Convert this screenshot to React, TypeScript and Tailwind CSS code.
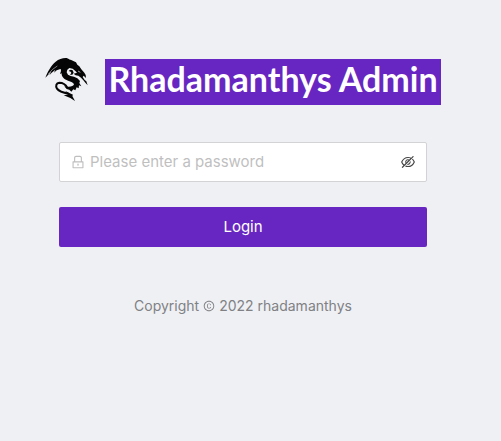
import { useState } from "react";
import { AiOutlineCopyright, AiOutlineEyeInvisible, AiOutlineLock } from "react-icons/ai";

function DragonLogo() {
  return (
    <svg viewBox="15 15 132 132" className="size-11 shrink-0" role="img" aria-label="Dragon">
      <path
        d="M16 77C22 61 33 40 47 29C57 21 69 17 80 18L88 22L94 30L84 46L70 50L61 51L50 55L42 62L46 53L35 62L28 70L34 58L24 69Z"
        fill="#050505"
      />
      <path d="M52 42Q36 51 25 66" fill="none" stroke="#eff0f4" strokeWidth="1.5" />
      <path
        d="M80 25L92 23L100 27L108 31L112 38L118 43L124 52L133 62L137 69L138 78L131 71L128 75L134 84L139 88L143 100L136 92L130 85L123 77L115 71L107 70L101 65L111 62L106 57L98 50L88 48L82 53L80 61L84 68L92 72L102 74L112 79L120 87L118 93L124 103L117 100L116 109L110 106L106 115L100 112L94 119L88 113L80 111L73 103L81 104C91 106 101 102 102 97C101 91 93 90 84 86C73 82 64 75 65 64L60 66L63 57L62 50Z"
        fill="#050505"
      />
      <path d="M86 57Q92 51 98 55L101 62L97 68L90 68L94 63L92 59Z" fill="#050505" />
      <path d="M114 57L121 61" fill="none" stroke="#eff0f4" strokeWidth="2" />
      <path
        d="M82 107C76 96 67 92 58 92C49 93 46 101 51 110C57 119 69 122 87 126"
        fill="none"
        stroke="#050505"
        strokeWidth="6"
      />
      <path d="M76 117L88 123L99 128L97 132L105 147L91 138L71 130L84 128Z" fill="#050505" />
    </svg>
  );
}

export default function App() {
  const [visible, setVisible] = useState(false);
  return (
    <div className="flex min-h-screen flex-col items-center bg-[#eff0f4] pt-[57px] pr-[15px] font-['Inter',sans-serif]">
      <header className="flex items-start gap-4">
        <DragonLogo />
        <h1 className="mt-0.5 bg-[#6726c1] px-[3px] pb-1.5 font-['Lato',sans-serif] text-[34px] leading-[40px] font-bold whitespace-nowrap text-white">
          Rhadamanthys Admin
        </h1>
      </header>
      <form className="mt-[37px] w-full max-w-[368px]" onSubmit={(e) => e.preventDefault()}>
        <div className="flex h-10 items-center gap-1 rounded-xs border border-[#d3d3d6] bg-white px-2.5">
          <AiOutlineLock className="size-4 shrink-0 text-[#bfbfbf]" aria-hidden="true" />
          <input
            type={visible ? "text" : "password"}
            aria-label="Password"
            placeholder="Please enter a password"
            className="min-w-0 flex-1 bg-transparent text-[15px] outline-none placeholder:text-[#bfbfbf]"
          />
          <button type="button" aria-label="Show password" onClick={() => setVisible(!visible)}>
            <AiOutlineEyeInvisible className="size-4 text-[#444]" />
          </button>
        </div>
        <button type="submit" className="mt-[25px] h-10 w-full rounded-xs bg-[#6726c1] text-[15px] text-white">
          Login
        </button>
      </form>
      <footer className="mt-12 flex items-center gap-1 text-sm leading-[22px] text-[#808184]">
        <span>Copyright</span>
        <AiOutlineCopyright className="size-3" role="img" aria-label="copyright" />
        <span>2022 rhadamanthys</span>
      </footer>
    </div>
  );
}
